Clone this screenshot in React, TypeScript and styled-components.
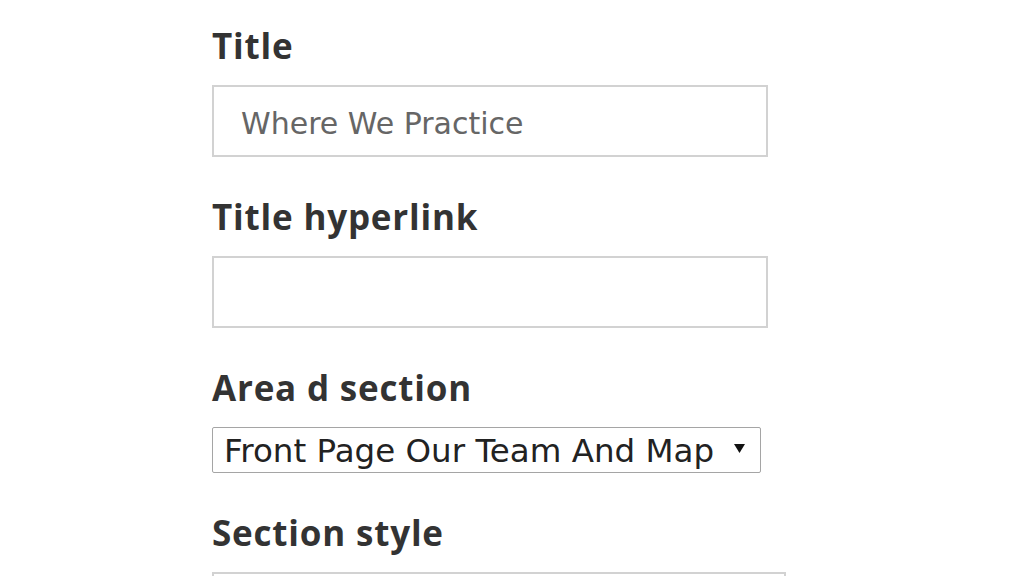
import styled, { createGlobalStyle } from "styled-components";

const GlobalStyle = createGlobalStyle`
  html, body {
    margin: 0;
    padding: 0;
    background: #ffffff;
    overflow: hidden;
  }
`;

const Page = styled.div`
  padding: 26px 0 0 212px;
  height: 576px;
  box-sizing: border-box;
  overflow: hidden;
`;

const Field = styled.div`
  margin-bottom: 40px;
`;

const Label = styled.label`
  display: block;
  font-family: "Open Sans", "Liberation Sans", sans-serif;
  font-weight: 700;
  font-size: 35px;
  letter-spacing: 0.8px;
  line-height: 40px;
  color: #333333;
  margin-bottom: 19px;
`;

const TextInput = styled.input<{ $width?: number }>`
  display: block;
  box-sizing: border-box;
  width: ${(p) => p.$width ?? 556}px;
  height: 72px;
  border: 2px solid #d2d2d2;
  border-radius: 0;
  padding: 4px 0 0 27px;
  font-family: "DejaVu Sans", Verdana, sans-serif;
  font-size: 30px;
  color: #666666;
  background: #fff;
  outline: none;
`;

const SelectWrap = styled.div`
  position: relative;
  width: 549px;
`;

const Select = styled.select`
  display: block;
  box-sizing: border-box;
  width: 549px;
  height: 46px;
  appearance: none;
  border: 1px solid #a5a5a5;
  border-radius: 2px;
  padding: 2px 0 0 11px;
  font-family: "DejaVu Sans", Verdana, sans-serif;
  font-size: 32.5px;
  color: #222222;
  background: #fff;
  outline: none;
`;

const Arrow = styled.svg`
  position: absolute;
  right: 16px;
  top: 17px;
  pointer-events: none;
`;

export default function App() {
  return (
    <>
      <GlobalStyle />
      <Page>
        <Field>
          <Label>Title</Label>
          <TextInput defaultValue="Where We Practice" />
        </Field>
        <Field>
          <Label>Title hyperlink</Label>
          <TextInput defaultValue="" />
        </Field>
        <Field>
          <Label>Area d section</Label>
          <SelectWrap>
            <Select defaultValue="front">
              <option value="front">Front Page Our Team And Map</option>
            </Select>
            <Arrow width="11" height="9" viewBox="0 0 11 9">
              <path d="M0 0 H11 L5.5 9 Z" fill="#111" />
            </Arrow>
          </SelectWrap>
        </Field>
        <Field>
          <Label>Section style</Label>
          <TextInput $width={574} defaultValue="" />
        </Field>
      </Page>
    </>
  );
}
